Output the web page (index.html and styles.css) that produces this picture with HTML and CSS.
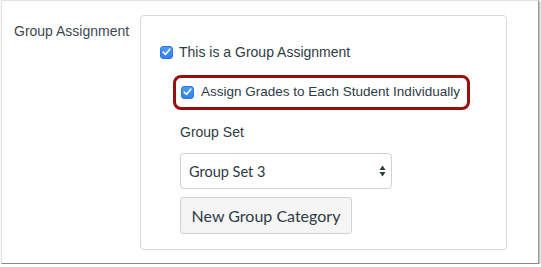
FILE: index.html
```html
<!DOCTYPE html>
<html lang="en">
<head>
    <meta charset="UTF-8">
    <meta name="viewport" content="width=device-width, initial-scale=1.0">
    <title>Group Assignment</title>
    <link rel="stylesheet" href="styles.css">
</head>
<body>
    <div class="frame">
        <div class="form-row">
            <div class="row-label">Group Assignment</div>
            <div class="options-box">
                <label class="check-row">
                    <span class="checkbox">
                        <svg width="9" height="8" viewBox="0 0 9 8"><path d="M1.2 4.2 L3.5 6.4 L7.8 1.2" fill="none" stroke="#fff" stroke-width="1.6" stroke-linecap="round" stroke-linejoin="round"/></svg>
                    </span>
                    This is a Group Assignment
                </label>
                <div class="highlight">
                    <label class="check-row">
                        <span class="checkbox">
                            <svg width="9" height="8" viewBox="0 0 9 8"><path d="M1.2 4.2 L3.5 6.4 L7.8 1.2" fill="none" stroke="#fff" stroke-width="1.6" stroke-linecap="round" stroke-linejoin="round"/></svg>
                        </span>
                        Assign Grades to Each Student Individually
                    </label>
                </div>
                <div class="group-set">
                    <div class="field-label">Group Set</div>
                    <div class="select">
                        <span>Group Set 3</span>
                        <svg class="arrows" width="7" height="12" viewBox="0 0 7 12"><path d="M3.5 0.5 L6.5 5 L0.5 5 Z M3.5 11.5 L6.5 7 L0.5 7 Z" fill="#2d3b45"/></svg>
                    </div>
                    <button class="btn">New Group Category</button>
                </div>
            </div>
        </div>
    </div>
</body>
</html>
```

FILE: styles.css
```css
body {
    margin: 0;
    background: #fff;
    font-family: "Liberation Sans", Arial, sans-serif;
    color: #2d3b45;
}
.frame {
    box-sizing: border-box;
    width: 538px;
    height: 264px;
    margin-left: 1px;
    border: 1px solid #e2e2e2;
    border-right-color: #9a9a9a;
    border-bottom-color: #8a8a8a;
    box-shadow: 1px 1px 2px rgba(0, 0, 0, 0.35);
    padding: 14px 0 0 12px;
}
.form-row {
    display: flex;
}
.row-label {
    width: 126px;
    font-size: 14px;
    line-height: 16px;
    padding-top: 8px;
    color: #3d4850;
}
.options-box {
    box-sizing: border-box;
    width: 367px;
    height: 235px;
    border: 1px solid #d8d8d8;
    border-radius: 4px;
    padding: 26px 0 0 19px;
}
.check-row {
    display: flex;
    align-items: center;
    gap: 6px;
    font-size: 14px;
    line-height: 20px;
    white-space: nowrap;
    color: #2d3b45;
}
.checkbox {
    box-sizing: border-box;
    flex: none;
    width: 13px;
    height: 13px;
    border-radius: 3px;
    background: linear-gradient(#4d9bf8, #2f7ff0);
    border: 1px solid #2c78e4;
    display: flex;
    align-items: center;
    justify-content: center;
}
.highlight {
    box-sizing: border-box;
    width: 297px;
    height: 35px;
    margin: 13px 0 0 13px;
    border: 3px solid #980e11;
    border-radius: 8px;
    padding: 4px 0 0 5px;
}
.highlight .check-row {
    gap: 7px;
    font-size: 13.5px;
}
.group-set {
    margin: 12px 0 0 20px;
}
.field-label {
    font-size: 14px;
    line-height: 20px;
    margin-bottom: 11px;
}
.select {
    box-sizing: border-box;
    width: 212px;
    height: 36px;
    border: 1px solid #cfd3d6;
    border-radius: 4px;
    display: flex;
    align-items: center;
    justify-content: space-between;
    padding: 0 5px 0 8px;
    font-family: Lato, sans-serif;
    font-size: 14.5px;
    color: #2d3b45;
}
.btn {
    box-sizing: border-box;
    display: block;
    width: 172px;
    height: 37px;
    margin-top: 8px;
    background: #f5f5f5;
    border: 1px solid #cfd3d6;
    border-radius: 3px;
    font-family: Lato, sans-serif;
    font-size: 16px;
    color: #2d3b45;
    padding: 0;
}
```
